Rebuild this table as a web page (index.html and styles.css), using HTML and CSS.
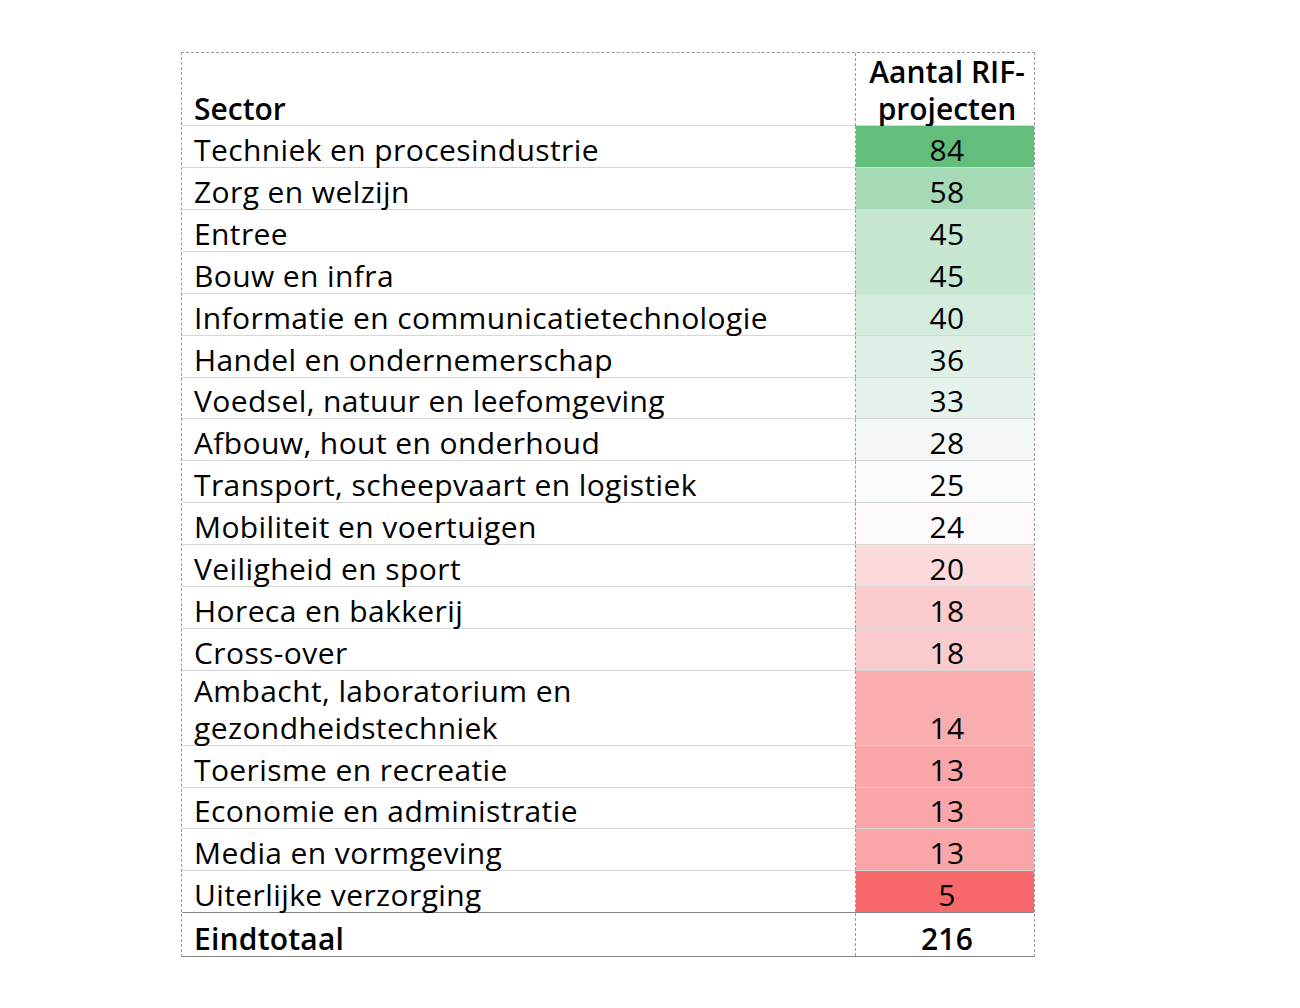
FILE: index.html
```html
<!DOCTYPE html>
<html lang="nl">
<head>
<meta charset="utf-8">
<title>RIF-projecten per sector</title>
<link rel="stylesheet" href="styles.css">
</head>
<body>
<div class="sheet">
  <div class="row head"><div class="c1"><span>Sector</span></div><div class="c2"><span>Aantal RIF-<br>projecten</span></div></div>
  <div class="row"><div class="c1"><span>Techniek en procesindustrie</span></div><div class="c2" style="background:#63be7b"><span>84</span></div></div>
  <div class="row"><div class="c1"><span>Zorg en welzijn</span></div><div class="c2" style="background:#a6d9b5"><span>58</span></div></div>
  <div class="row"><div class="c1"><span>Entree</span></div><div class="c2" style="background:#c7e7d2"><span>45</span></div></div>
  <div class="row"><div class="c1"><span>Bouw en infra</span></div><div class="c2" style="background:#c7e7d2"><span>45</span></div></div>
  <div class="row"><div class="c1"><span>Informatie en communicatietechnologie</span></div><div class="c2" style="background:#d4ecdd"><span>40</span></div></div>
  <div class="row"><div class="c1"><span>Handel en ondernemerschap</span></div><div class="c2" style="background:#def0e6"><span>36</span></div></div>
  <div class="row r41"><div class="c1"><span>Voedsel, natuur en leefomgeving</span></div><div class="c2" style="background:#e6f3ec"><span>33</span></div></div>
  <div class="row"><div class="c1"><span>Afbouw, hout en onderhoud</span></div><div class="c2" style="background:#f3f8f7"><span>28</span></div></div>
  <div class="row"><div class="c1"><span>Transport, scheepvaart en logistiek</span></div><div class="c2" style="background:#fbfcfe"><span>25</span></div></div>
  <div class="row"><div class="c1"><span>Mobiliteit en voertuigen</span></div><div class="c2" style="background:#fcf8fb"><span>24</span></div></div>
  <div class="row"><div class="c1"><span>Veiligheid en sport</span></div><div class="c2" style="background:#fbdadd"><span>20</span></div></div>
  <div class="row"><div class="c1"><span>Horeca en bakkerij</span></div><div class="c2" style="background:#fbcbce"><span>18</span></div></div>
  <div class="row"><div class="c1"><span>Cross-over</span></div><div class="c2" style="background:#fbcbce"><span>18</span></div></div>
  <div class="row r75"><div class="c1"><span>Ambacht, laboratorium en<br>gezondheidstechniek</span></div><div class="c2" style="background:#faadaf"><span>14</span></div></div>
  <div class="row"><div class="c1"><span>Toerisme en recreatie</span></div><div class="c2" style="background:#faa5a8"><span>13</span></div></div>
  <div class="row r41"><div class="c1"><span>Economie en administratie</span></div><div class="c2" style="background:#faa5a8"><span>13</span></div></div>
  <div class="row"><div class="c1"><span>Media en vormgeving</span></div><div class="c2" style="background:#faa5a8"><span>13</span></div></div>
  <div class="row last"><div class="c1"><span>Uiterlijke verzorging</span></div><div class="c2" style="background:#f8696b"><span>5</span></div></div>
  <div class="row total"><div class="c1"><span>Eindtotaal</span></div><div class="c2"><span>216</span></div></div>
</div>
</body>
</html>
```
FILE: styles.css
```css
html, body {
  margin: 0;
  padding: 0;
  background: #ffffff;
}

body {
  font-family: "Open Sans", "Noto Sans", sans-serif;
  font-size: 30px;
  letter-spacing: 0.4px;
  color: #000000;
}

.sheet {
  margin: 52px 0 0 181px;
  width: 854px;
  box-sizing: border-box;
  border-left: 1px dashed #9a9a9a;
  border-right: 1px dashed #9a9a9a;
  border-top: 1px dashed #9a9a9a;
  display: flex;
  flex-direction: column;
}

.row {
  display: grid;
  grid-template-columns: 674px 178px;
  height: 42px;
  box-sizing: border-box;
  border-bottom: 1px solid #d6d6d6;
}

.row.r41 { height: 41px; }
.row.r75 { height: 75px; }
.row.head { height: 73px; font-weight: 600; letter-spacing: 0; }
.row.last { border-bottom-color: #858585; }
.row.total {
  height: 44px;
  font-weight: 600;
  letter-spacing: 0.2px;
  border-bottom: 1px solid #858585;
}

.c1, .c2 {
  display: flex;
  align-items: flex-end;
  box-sizing: border-box;
  line-height: 37px;
}

.c1 {
  padding-left: 12px;
  border-right: 1px dashed #9a9a9a;
}

.c2 {
  justify-content: center;
  text-align: center;
  padding-left: 4px;
}

.c1 span, .c2 span {
  display: block;
  margin-bottom: -1px;
  white-space: nowrap;
}
```
